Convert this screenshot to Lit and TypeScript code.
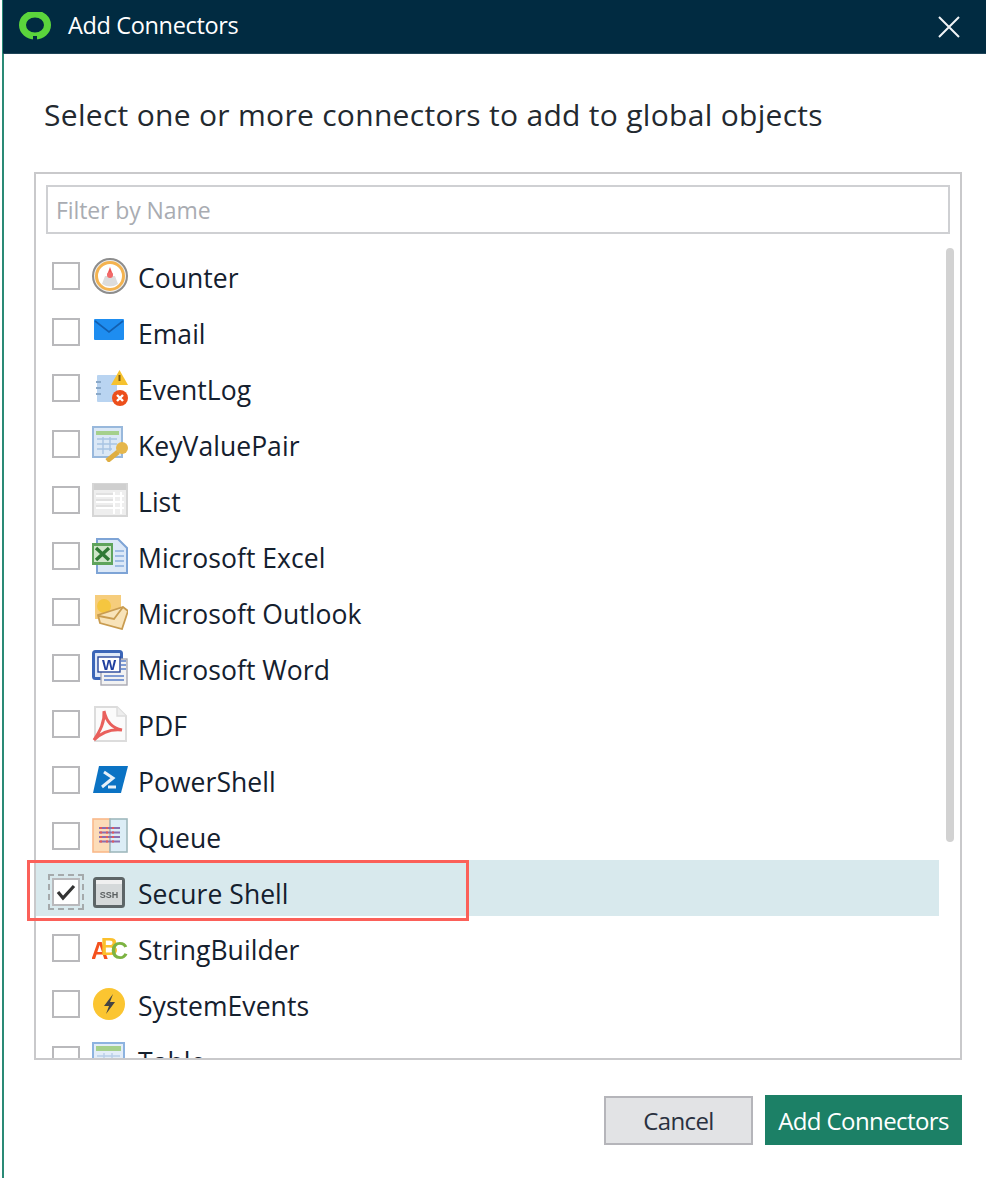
import { LitElement, html, css, svg } from "lit";
import { customElement } from "lit/decorators.js";

const icons: Record<string, unknown> = {
  counter: svg`<circle cx="18" cy="18" r="17" fill="#eee" stroke="#8d8d8d" stroke-width="2"/><circle cx="18" cy="18" r="13.5" fill="#fff" stroke="#f4b350" stroke-width="3"/><path d="M18 9l3 8h-6z" fill="#ef5350"/><path d="M13 18h10l3 8q-8 5-16 0z" fill="#dcdcdc"/><circle cx="18" cy="17" r="3" fill="#f26a6a"/>`,
  email: svg`<rect x="2" y="5" width="30" height="21" rx="1" fill="#1e8df0"/><path d="M3 7l14 11L31 7" fill="none" stroke="#125fb0" stroke-width="1.6"/>`,
  eventlog: svg`<rect x="5" y="5" width="20" height="27" rx="1" fill="#b9d4f1"/><path d="M4 12h5M4 18h5M4 24h5" stroke="#8aa9c9" stroke-width="2"/><path d="M27.5 0l8.5 15H19z" fill="#f6c22f"/><path d="M27.5 5v6" stroke="#7a5a10" stroke-width="2"/><circle cx="28" cy="28" r="8" fill="#ec4f1c"/><path d="M25 25l6 6M31 25l-6 6" stroke="#fff" stroke-width="2.4"/>`,
  kv: svg`<rect x="1" y="1" width="29" height="30" fill="#dbe8f6" stroke="#98b8dc" stroke-width="2"/><rect x="4" y="5" width="23" height="4" fill="#a5d08c"/><path d="M5 13h20M5 18h20M5 23h15M11 11v17M18 11v14" stroke="#a8c3e2" stroke-width="1.4"/><circle cx="30" cy="22" r="6" fill="#e5b64b"/><path d="M26 26l-11 9" stroke="#dfae42" stroke-width="5"/>`,
  list: svg`<rect x="1" y="2" width="34" height="32" fill="#eeeeee" stroke="#d6d6d6" stroke-width="2"/><rect x="2" y="2" width="32" height="6" fill="#cfcfcf"/><path d="M4 14h28M4 20h28M4 26h28M22 10v22M29 10v22" stroke="#fff" stroke-width="2"/><path d="M4 12h17M4 18h17M4 24h17" stroke="#d4d4d4" stroke-width="1.2"/>`,
  excel: svg`<path d="M5 1h21l9 9v25H5z" fill="#dce8f7" stroke="#7ea4d6" stroke-width="2"/><path d="M23 13h9M23 18h9M23 23h9M23 28h9" stroke="#9dbce3" stroke-width="2"/><rect x="0" y="5" width="21" height="22" fill="#5fa45c"/><rect x="2" y="8" width="17" height="16" fill="#cfe6ca"/><path d="M4 10l13 12M17 10L4 22" stroke="#2f7a34" stroke-width="3.4"/>`,
  outlook: svg`<rect x="3" y="1" width="26" height="24" fill="#f6cd7c"/><circle cx="12" cy="12" r="7" fill="#f5c63f"/><path d="M6 21l25-8 5 4-6 18-22-6z" fill="#f8e3b9" stroke="#c99c50" stroke-width="1.8"/><path d="M7 22l15 3 9-12" fill="none" stroke="#c99c50" stroke-width="1.8"/>`,
  word: svg`<rect x="1.5" y="1.5" width="28" height="27" rx="2" fill="#dfe9f8" stroke="#3b66b8" stroke-width="3"/><rect x="9" y="9" width="26" height="26" fill="#f2f2f2" stroke="#a9a9b3" stroke-width="1.4"/><rect x="6" y="7" width="22" height="15" fill="#fff" stroke="#27469b" stroke-width="1.4"/><text x="17" y="20" font-size="15" font-weight="700" fill="#1f3f9f" text-anchor="middle" font-family="Liberation Sans">W</text><path d="M12 26h20M12 30h20M29 11h5M29 15h5M29 19h5" stroke="#7f9bd3" stroke-width="1.8"/>`,
  pdf: svg`<path d="M3 1h22l9 9v25H3z" fill="#fbfbfb" stroke="#dcdcdc" stroke-width="2"/><path d="M25 1v9h9" fill="#ededed" stroke="#dcdcdc" stroke-width="1.4"/><path d="M12 5c2 9 7 17 18 19-9-1-19 1-28 10 6-9 11-18 10-29z" fill="none" stroke="#e9605c" stroke-width="3"/>`,
  ps: svg`<path d="M7 4h29l-7 27H1z" fill="#0b73c4"/><path d="M12 10l9 6-11 9" fill="none" stroke="#e6f0f8" stroke-width="3"/><path d="M16 25h8" stroke="#e6f0f8" stroke-width="3"/>`,
  queue: svg`<rect x="1" y="1" width="17" height="33" fill="#fcdcb8" stroke="#f9b98a" stroke-width="1.6"/><rect x="18" y="1" width="17" height="33" fill="#dcedf6" stroke="#9fb8bd" stroke-width="1.6"/><path d="M7 10h21M7 14.5h21M7 19h21M7 23.5h21" stroke="#8a6fb0" stroke-width="2"/><path d="M8 10h2M14 10h2M20 10h2M8 14.5h2M14 14.5h2M20 14.5h2M8 19h2M14 19h2M20 19h2M8 23.5h2M14 23.5h2M20 23.5h2" stroke="#e25a5a" stroke-width="2.2"/>`,
  ssh: svg`<rect x="2.5" y="4.5" width="29" height="28" rx="2" fill="#d5d9da" stroke="#5d6567" stroke-width="3"/><rect x="4" y="6" width="26" height="4" fill="#f0f0f0"/><text x="17" y="24" font-size="9" font-weight="700" fill="#5a5f61" text-anchor="middle" font-family="Liberation Sans">SSH</text>`,
  abc: svg`<text x="-1" y="29" font-size="24" font-weight="700" font-family="Liberation Sans" letter-spacing="-7.5"><tspan fill="#f4511e">A</tspan><tspan fill="#fbc02d" dy="-4">B</tspan><tspan fill="#7cb342" dy="4">C</tspan></text>`,
  sys: svg`<circle cx="17" cy="18" r="16" fill="#fbc531"/><path d="M21 8l-9 12h5l-3 8 9-12h-5z" fill="#444"/>`,
  table: svg`<rect x="1" y="1" width="31" height="31" fill="#e3edf8" stroke="#8db3e0" stroke-width="2"/><rect x="4" y="4" width="25" height="5" fill="#a5d08c"/><path d="M5 14h23M5 20h23M5 26h23M12 11v19M20 11v19" stroke="#b8cee8" stroke-width="1.4"/>`,
};

const items: [string, string][] = [
  ["Counter", "counter"],
  ["Email", "email"],
  ["EventLog", "eventlog"],
  ["KeyValuePair", "kv"],
  ["List", "list"],
  ["Microsoft Excel", "excel"],
  ["Microsoft Outlook", "outlook"],
  ["Microsoft Word", "word"],
  ["PDF", "pdf"],
  ["PowerShell", "ps"],
  ["Queue", "queue"],
  ["Secure Shell", "ssh"],
  ["StringBuilder", "abc"],
  ["SystemEvents", "sys"],
  ["Table", "table"],
];

@customElement("app-root")
export class AppRoot extends LitElement {
  static styles = css`
    :host {
      display: block;
      position: relative;
      width: 986px;
      height: 1178px;
      overflow: hidden;
      background: #fff;
      font-family: "Open Sans", "Noto Sans", "Liberation Sans", sans-serif;
      color: #1b2430;
    }
    .frame {
      height: 100%;
      margin-left: 2px;
      border-left: 2px solid #2a8a76;
      display: flex;
      flex-direction: column;
      box-sizing: border-box;
    }
    .title {
      height: 53px;
      flex: none;
      margin-left: -1px;
      background: #012b41;
      border-bottom: 1px solid #1f4558;
      display: flex;
      align-items: center;
      padding: 0 25px 0 16px;
      color: #fff;
      font-size: 23.5px;
      letter-spacing: -0.35px;
    }
    .logo {
      width: 34px;
      height: 30px;
      margin-right: 15px;
      filter: blur(0.4px);
    }
    .name {
      flex: 1;
      margin-top: -3px;
    }
    .close {
      width: 24px;
      height: 24px;
    }
    h1 {
      margin: 42px 0 0 40px;
      font-size: 30px;
      line-height: 38px;
      font-weight: 400;
      letter-spacing: 0.3px;
      color: #23292f;
    }
    .box {
      margin: 38px 24px 0 30px;
      height: 888px;
      box-sizing: border-box;
      border: 2px solid #c9c9cb;
      display: flex;
      flex-direction: column;
      overflow: hidden;
    }
    .filter {
      flex: none;
      margin: 11px 10px 10px 10px;
      height: 49px;
      box-sizing: border-box;
      border: 2px solid #cfd0d3;
      display: flex;
      align-items: center;
      padding-left: 8px;
      font-size: 23px;
      letter-spacing: -0.1px;
      color: #a9acb2;
    }
    .body {
      flex: 1;
      min-height: 0;
      display: flex;
    }
    .rows {
      flex: 1;
      min-width: 0;
      overflow: hidden;
    }
    .row {
      height: 56px;
      box-sizing: border-box;
      padding: 8px 0 0 16px;
      display: flex;
      align-items: center;
      font-size: 26.5px;
      letter-spacing: 0.05px;
      color: #14202e;
    }
    .row.sel {
      background: #d8e9ed;
    }
    .cb {
      flex: none;
      width: 28px;
      height: 28px;
      box-sizing: border-box;
      border: 2px solid #b9b9bc;
      background: #fff;
      margin-right: 12px;
      display: flex;
      align-items: center;
      justify-content: center;
      position: relative;
    }
    .sel .cb::after {
      content: "";
      position: absolute;
      inset: -6px;
      border: 2px dashed #a5aaac;
    }
    .cb svg {
      width: 22px;
      height: 22px;
    }
    .icon {
      flex: none;
      width: 36px;
      height: 36px;
      margin-right: 10px;
      filter: blur(0.5px);
    }
    .label {
      margin-top: 4px;
      white-space: nowrap;
    }
    .mark {
      position: absolute;
      left: 27px;
      top: 860px;
      width: 442px;
      height: 61px;
      box-sizing: border-box;
      border: 3px solid #fb6059;
      pointer-events: none;
    }
    .track {
      flex: none;
      width: 8px;
      margin: 4px 6px 0 7px;
    }
    .thumb {
      height: 594px;
      border-radius: 4px;
      background: #d2d2d2;
    }
    .foot {
      display: flex;
      justify-content: flex-end;
      align-items: flex-end;
      gap: 12px;
      margin: 35px 24px 0 0;
    }
    .btn {
      box-sizing: border-box;
      display: flex;
      align-items: center;
      justify-content: center;
      font-size: 24px;
      letter-spacing: -0.6px;
    }
    .cancel {
      width: 149px;
      height: 49px;
      background: #e2e3e5;
      border: 2px solid #b5b5ba;
      color: #2a3140;
    }
    .add {
      width: 197px;
      height: 50px;
      background: #1c8066;
      color: #fff;
    }
  `;

  render() {
    return html`
      <div class="frame">
        <div class="title">
          <svg class="logo" viewBox="0 0 34 30">
            <ellipse cx="16" cy="13" rx="12.5" ry="11" fill="none" stroke="#5bd43c" stroke-width="7" />
            <path d="M14 24h4v6h-4z" fill="#012b41" />
          </svg>
          <span class="name">Add Connectors</span>
          <svg class="close" viewBox="0 0 24 24">
            <path d="M2 2l20 20M22 2L2 22" stroke="#f1f4f6" stroke-width="2" />
          </svg>
        </div>
        <h1>Select one or more connectors to add to global objects</h1>
        <div class="box">
          <div class="filter">Filter by Name</div>
          <div class="body">
            <div class="rows">
              ${items.map(([name, icon]) => {
                const sel = name === "Secure Shell";
                return html`
                  <div class="row ${sel ? "sel" : ""}">
                    <span class="cb">
                      ${sel
                        ? html`<svg viewBox="0 0 22 22">
                            <path d="M3 11l5 6L19 5" fill="none" stroke="#333" stroke-width="3.2" />
                          </svg>`
                        : ""}
                    </span>
                    <svg class="icon" viewBox="0 0 36 36">${icons[icon]}</svg>
                    <span class="label">${name}</span>
                  </div>
                `;
              })}
            </div>
            <div class="track"><div class="thumb"></div></div>
          </div>
        </div>
        <div class="foot">
          <div class="btn cancel">Cancel</div>
          <div class="btn add">Add Connectors</div>
        </div>
      </div>
      <span class="mark"></span>
    `;
  }
}
